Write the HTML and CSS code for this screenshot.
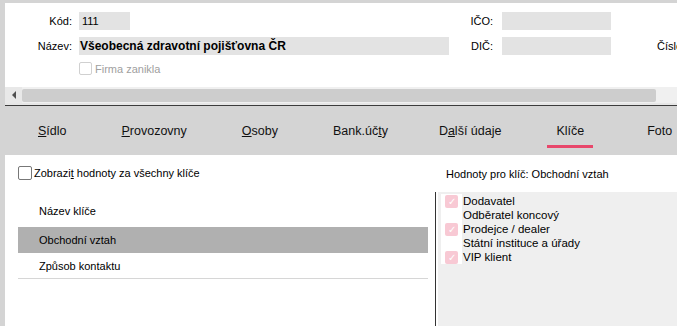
FILE: index.html
```html
<!DOCTYPE html>
<html lang="cs">
<head>
    <meta charset="UTF-8">
    <title>Firma - Klíče</title>
    <link rel="stylesheet" href="styles.css">
</head>
<body>
    <div class="window">
        <div class="header">
            <div class="form">
                <div class="label">Kód:</div>
                <div><div class="input short">111</div></div>
                <div class="label right">IČO:</div>
                <div><div class="input mid"></div></div>
                <div></div>

                <div class="label">Název:</div>
                <div><div class="input wide bold">Všeobecná zdravotní pojišťovna ČR</div></div>
                <div class="label right">DIČ:</div>
                <div><div class="input mid"></div></div>
                <div class="label plain">Číslo</div>

                <div></div>
                <div class="check-row disabled">
                    <span class="box"></span>
                    <span>Firma zanikla</span>
                </div>
            </div>
        </div>

        <div class="hscroll">
            <div class="arrow"><span class="tri"></span></div>
            <div class="thumb"></div>
        </div>
        <div class="split"></div>

        <div class="tabs">
            <div class="tab"><u>S</u>ídlo</div>
            <div class="tab"><u>P</u>rovozovny</div>
            <div class="tab"><u>O</u>soby</div>
            <div class="tab">Bank.úč<u>t</u>y</div>
            <div class="tab tight">D<u>a</u>lší údaje</div>
            <div class="tab active">Klíče</div>
            <div class="tab wide">Foto</div>
        </div>

        <div class="content">
            <div class="keys">
                <div class="check-row all">
                    <span class="box"></span>
                    <span>Zobrazi<u>t</u> hodnoty za všechny klíče</span>
                </div>
                <div class="grid">
                    <div class="grid-head">Název klíče</div>
                    <div class="grid-row selected">Obchodní vztah</div>
                    <div class="grid-row">Způsob kontaktu</div>
                </div>
            </div>

            <div class="values">
                <div class="values-title">Hodnoty pro klíč: Obchodní vztah</div>
                <div class="values-box">
                    <div class="value-list">
                        <div class="value"><span class="mark on"></span>Dodavatel</div>
                        <div class="value"><span class="mark"></span>Odběratel koncový</div>
                        <div class="value"><span class="mark on"></span>Prodejce / dealer</div>
                        <div class="value"><span class="mark"></span>Státní instituce a úřady</div>
                        <div class="value"><span class="mark on"></span>VIP klient</div>
                    </div>
                </div>
            </div>
        </div>
    </div>
</body>
</html>
```

FILE: styles.css
```css
* {
    margin: 0;
    padding: 0;
    box-sizing: border-box;
}

body {
    background: #d4d4d4;
    color: #000;
    font-family: 'Liberation Sans', Arial, sans-serif;
    font-size: 11px;
    height: 326px;
    overflow: hidden;
}

.window {
    padding: 3px 0 0 5px;
    height: 100%;
    display: flex;
    flex-direction: column;
}

/* horní formulář */
.header {
    background: #fff;
    height: 84px;
    padding-top: 9px;
    overflow: hidden;
}

.form {
    display: grid;
    grid-template-columns: 74px 370px 53px 155px 40px;
    row-gap: 7px;
    align-items: center;
}

.label {
    text-align: right;
    padding-right: 7px;
    white-space: nowrap;
}

.label.right {
    padding-right: 9px;
}

.label.plain {
    text-align: left;
    padding-right: 0;
}

.input {
    background: #e3e3e3;
    height: 18px;
    line-height: 18px;
    padding-left: 3px;
}

.input.short { width: 51px; }
.input.mid { width: 109px; }
.input.wide { width: 370px; }

.input.bold {
    font-weight: bold;
    font-size: 12px;
    padding-left: 1px;
}

.check-row {
    display: flex;
    align-items: center;
    gap: 3px;
    grid-column: 2 / span 3;
}

.check-row .box {
    width: 13px;
    height: 13px;
    border: 1px solid #333;
    border-radius: 2px;
    background: #fff;
}

.check-row.disabled {
    color: #a0a0a0;
}

.check-row.disabled .box {
    border-color: #d0d0d0;
}

/* vodorovný posuvník */
.hscroll {
    height: 16px;
    background: #f0f0f0;
    display: flex;
    align-items: center;
}

.arrow {
    width: 17px;
    height: 16px;
    background: #e8e8e8;
    display: flex;
    align-items: center;
    justify-content: center;
}

.tri {
    width: 0;
    height: 0;
    border-top: 4px solid transparent;
    border-bottom: 4px solid transparent;
    border-right: 4px solid #505050;
}

.thumb {
    width: 634px;
    height: 13px;
    background: #cdcdcd;
    border-radius: 2px;
}

.split {
    height: 3px;
    background: #e6e6e6;
    border-bottom: 1px solid #3c3c3c;
}

/* záložky */
.tabs {
    height: 49px;
    display: flex;
    align-items: center;
    gap: 37px;
    padding-left: 24px;
    font-size: 12.5px;
    color: #111;
}

.tab {
    position: relative;
    padding: 0 9px;
    white-space: nowrap;
}

.tab.tight {
    margin-left: -4px;
}

.tab.wide {
    margin-left: 8px;
}

.tab.active::after {
    content: '';
    position: absolute;
    left: 0;
    right: 0;
    bottom: -10px;
    height: 3px;
    background: #e8476b;
}

/* obsah záložky Klíče */
.content {
    flex: 1;
    background: #fff;
    display: flex;
}

.keys {
    width: 430px;
    padding: 11px 0 0 13px;
}

.check-row.all {
    gap: 2px;
}

.check-row.all .box {
    width: 14px;
    height: 14px;
    border-color: #777;
}

.grid {
    margin-top: 17px;
    width: 410px;
}

.grid-head {
    height: 30px;
    line-height: 28px;
    padding-left: 21px;
}

.grid-row {
    height: 26px;
    line-height: 26px;
    padding-left: 21px;
    border-bottom: 1px solid #d6d6d6;
}

.grid-row.selected {
    background: #b0b0b0;
    border-bottom: none;
}

.values {
    flex: 1;
    display: flex;
    flex-direction: column;
}

.values-title {
    height: 37px;
    padding: 13px 0 0 11px;
}

.values-box {
    flex: 1;
    border-left: 1px solid #333;
    padding-left: 2px;
}

.value-list {
    height: 100%;
    background: #efefef;
    padding-top: 2px;
}

.value {
    height: 14px;
    line-height: 14px;
    display: flex;
    align-items: center;
    font-size: 11.5px;
}

.mark {
    width: 21px;
    height: 14px;
    background: #fff;
    margin: 0 1px 0 3px;
    display: flex;
    justify-content: center;
    align-items: center;
}

.mark.on::before {
    content: '✓';
    width: 13px;
    height: 13px;
    line-height: 13px;
    border-radius: 2px;
    background: #f8c9d4;
    color: #fff;
    font-size: 10px;
    text-align: center;
}
```
